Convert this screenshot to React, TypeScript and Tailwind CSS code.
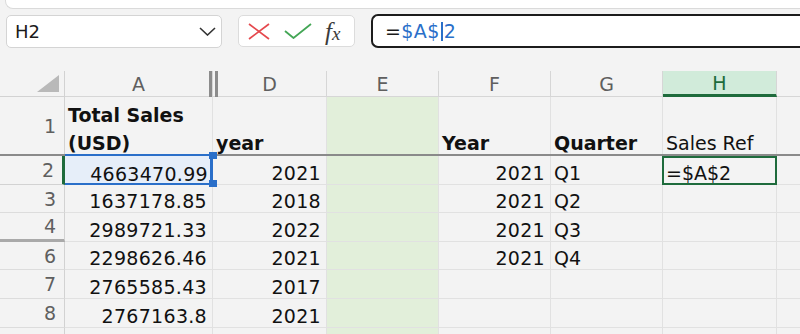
import React from "react";

// widths of the visible sheet columns: A, D, E, F, G, H, and the sliver of I
const COL_W = ["w-[148px]", "w-[114px]", "w-[112px]", "w-[112px]", "w-[112px]", "w-[114px]", "w-[40px]"];
// column I's letter sits beyond the right edge, so its header stays blank
const COL_NAMES = ["A", "D", "E", "F", "G", "H", ""];

type Row = {
  n: string;
  h: string;
  a?: string;
  d?: string;
  f?: string;
  g?: string;
  hidBelow?: boolean;
};

const ROWS: Row[] = [
  { n: "3", h: "h-[28px]", a: "1637178.85", d: "2018", f: "2021", g: "Q2" },
  { n: "4", h: "h-[29px]", a: "2989721.33", d: "2022", f: "2021", g: "Q3", hidBelow: true },
  { n: "6", h: "h-[28px]", a: "2298626.46", d: "2021", f: "2021", g: "Q4" },
  { n: "7", h: "h-[29px]", a: "2765585.43", d: "2017" },
  { n: "8", h: "h-[29px]", a: "2767163.8", d: "2021" },
  // row 9 only peeks in at the bottom edge
  { n: "", h: "h-[29px]" },
];

function Num({ children, className = "" }: { children?: React.ReactNode; className?: string }) {
  return (
    <div className={`flex h-full shrink-0 items-end justify-end border-b border-r border-[#e1e1e1] pr-[5px] leading-[22px] tracking-[0.3px] ${className}`}>
      {children}
    </div>
  );
}

function Txt({ children, className = "" }: { children?: React.ReactNode; className?: string }) {
  return (
    <div className={`flex h-full shrink-0 items-end justify-start border-b border-r border-[#e1e1e1] pl-[3px] leading-[22px] ${className}`}>
      {children}
    </div>
  );
}

function RowHead({ n, className = "" }: { n: string; className?: string }) {
  return (
    <div className={`flex h-full w-[65px] shrink-0 items-center justify-end border-r border-[#d2d2d2] bg-[#f3f3f3] pr-[8px] leading-[22px] text-[#5f5f5f] ${className}`}>
      {n}
    </div>
  );
}

export default function App() {
  return (
    <div className="h-[334px] w-[800px] overflow-hidden bg-[#f3f3f3] font-['DejaVu_Sans',sans-serif] text-[19px] text-[#111]">
      {/* ribbon edge */}
      <div className="flex h-[9px]">
        <div className="ml-[5px] flex-1 rounded-bl-[8px] border-b border-l border-[#dadada] bg-white" />
      </div>

      {/* formula bar */}
      <div className="mt-[5px] flex h-[34px] items-end pl-[6px]">
        <div className="flex h-[33px] w-[216px] shrink-0 items-center justify-between rounded-[5px] border border-[#d4d4d4] bg-white pl-[8px] pr-[5px] text-[18px] text-[#1b1b1b]">
          <span>H2</span>
          <svg width="17" height="9" viewBox="0 0 17 9" fill="none">
            <polyline points="1,1 8.5,8 16,1" stroke="#333" strokeWidth="1.6" />
          </svg>
        </div>
        <div className="ml-[16px] mt-[1px] flex h-[32px] w-[117px] shrink-0 items-center self-start rounded-[5px] border border-[#dcdcdc] bg-white pl-[9px]">
          <svg width="22" height="17" viewBox="0 0 22 17" fill="none">
            <line x1="1" y1="1" x2="21" y2="16" stroke="#e5484d" strokeWidth="1.7" />
            <line x1="21" y1="1" x2="1" y2="16" stroke="#e5484d" strokeWidth="1.7" />
          </svg>
          <svg className="ml-[14px]" width="28" height="16" viewBox="0 0 28 16" fill="none">
            <polyline points="1,8 9.5,15 27,1" stroke="#43a655" strokeWidth="1.8" />
          </svg>
          <span className="ml-[13px] font-['Liberation_Serif',serif] text-[25px] italic leading-none text-[#3b3b3b]">
            f<span className="text-[19px]">x</span>
          </span>
        </div>
        <div className="ml-[16px] flex h-[34px] min-w-0 flex-1 items-center rounded-l-[7px] border-y-2 border-l-2 border-[#1c1c1c] bg-white pl-[12px] text-[19px] tracking-[0.4px]">
          <span className="text-[#1a1a1a]">=</span>
          <span className="text-[#2a6fc9]">$A$</span>
          <span className="mx-[1px] h-[19px] w-[2px] bg-[#2a6fc9]" />
          <span className="text-[#2a6fc9]">2</span>
        </div>
      </div>

      {/* column headers */}
      <div className="mt-[23px] flex h-[26px] text-[#5f5f5f]">
        <div className="flex h-full w-[65px] shrink-0 items-end justify-end border-b border-r border-[#d2d2d2] pb-[4px] pr-[5px]">
          <svg width="22" height="17" viewBox="0 0 22 17">
            <polygon points="22,0 22,17 0,17" fill="#b9b9b9" />
          </svg>
        </div>
        {COL_NAMES.map((c, i) =>
          c === "H" ? (
            <div key={i} className={`${COL_W[i]} flex h-full shrink-0 items-end justify-center border-b-[3px] border-r border-b-[#1e6b3c] border-r-[#d6d6d6] bg-[#d1ebda] leading-[22px] text-[#1e6b3c]`}>
              {c}
            </div>
          ) : (
            <div key={i} className={`${COL_W[i]} relative flex h-full shrink-0 items-end justify-center border-b border-r border-[#d6d6d6] pb-[1px] leading-[22px]`}>
              {c}
              {c === "A" && (
                <span className="absolute -right-[6px] top-0 z-10 h-[26px] w-[9px] border-x-[3px] border-[#8c8c8c]" />
              )}
            </div>
          )
        )}
      </div>

      {/* row 1 */}
      <div className="flex h-[59px] border-b-2 border-[#8a8a8a]">
        <RowHead n="1" className="border-b-0" />
        <div className={`${COL_W[0]} flex h-full shrink-0 flex-col justify-end gap-[6px] border-r border-[#e1e1e1] pl-[3px] font-bold leading-[22px]`}>
          <span>Total Sales</span>
          <span>(USD)</span>
        </div>
        <Txt className={`${COL_W[1]} border-b-0 font-bold`}>year</Txt>
        <Txt className={`${COL_W[2]} border-b-0 bg-[#e2efda]`} />
        <Txt className={`${COL_W[3]} border-b-0 font-bold`}>Year</Txt>
        <Txt className={`${COL_W[4]} border-b-0 font-bold`}>Quarter</Txt>
        <Txt className={`${COL_W[5]} border-b-0`}>Sales Ref</Txt>
        <Txt className={`${COL_W[6]} border-b-0`} />
      </div>

      {/* row 2 */}
      <div className="flex h-[29px]">
        <RowHead n="2" className="border-b border-r-[3px] border-b-[#d2d2d2] border-r-[#1e6b3c] bg-[#d1ebda] text-[#1e6b3c]" />
        <div className={`${COL_W[0]} relative flex h-full shrink-0 items-end justify-end bg-[#e6eef9] pr-[5px] leading-[22px] tracking-[0.3px]`}>
          4663470.99
          <span className="absolute -top-[2px] left-0 right-0 h-[2px] bg-[#2a6fc9]" />
          <span className="absolute bottom-0 left-0 right-0 h-[2px] bg-[#2a6fc9]" />
          <span className="absolute -top-[2px] bottom-0 right-0 w-[3px] bg-[#2a6fc9]" />
          <span className="absolute -right-[4px] -top-[4px] z-10 h-[7px] w-[8px] bg-[#2a6fc9]" />
          <span className="absolute -bottom-[2px] -right-[4px] z-10 h-[7px] w-[8px] bg-[#2a6fc9]" />
        </div>
        <Num className={COL_W[1]}>2021</Num>
        <Num className={`${COL_W[2]} bg-[#e2efda]`} />
        <Num className={COL_W[3]}>2021</Num>
        <Txt className={COL_W[4]}>Q1</Txt>
        <div className={`${COL_W[5]} relative flex h-full shrink-0 items-end border-b border-r border-[#e1e1e1] pl-[3px] leading-[22px]`}>
          =$A$2
          <span className="absolute -bottom-[1px] -left-[1px] -right-[1px] top-0 z-10 border-2 border-[#1e6b3c]" />
        </div>
        <Txt className={COL_W[6]} />
      </div>

      {ROWS.map((r, i) => (
        <div key={i} className={`flex ${r.h}`}>
          <RowHead
            n={r.n}
            className={r.hidBelow ? "border-b-[3px] border-b-[#a9a9a9]" : "border-b border-b-[#dcdcdc]"}
          />
          <Num className={COL_W[0]}>{r.a}</Num>
          <Num className={COL_W[1]}>{r.d}</Num>
          <Num className={`${COL_W[2]} bg-[#e2efda]`} />
          <Num className={COL_W[3]}>{r.f}</Num>
          <Txt className={COL_W[4]}>{r.g}</Txt>
          <Txt className={COL_W[5]} />
          <Txt className={COL_W[6]} />
        </div>
      ))}
    </div>
  );
}
